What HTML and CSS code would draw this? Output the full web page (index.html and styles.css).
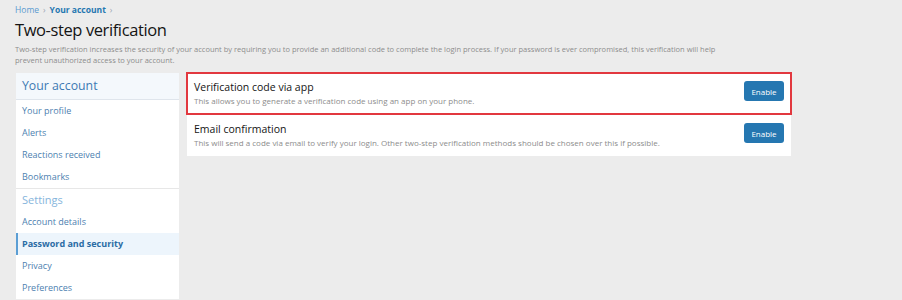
FILE: index.html
```html
<!DOCTYPE html>
<html lang="en">
<head>
    <meta charset="UTF-8">
    <meta name="viewport" content="width=device-width, initial-scale=1.0">
    <title>Two-step verification</title>
    <link rel="stylesheet" href="styles.css">
</head>
<body>
    <div class="page">
        <ul class="breadcrumbs">
            <li><a href="#">Home</a></li>
            <li><a href="#" class="current">Your account</a></li>
        </ul>
        <h1 class="page-title">Two-step verification</h1>
        <p class="page-desc">Two-step verification increases the security of your account by requiring you to provide an additional code to complete the login process. If your password is ever compromised, this verification will help prevent unauthorized access to your account.</p>

        <div class="page-body">
            <nav class="side-nav">
                <h2 class="side-nav-header">Your account</h2>
                <a href="#" class="side-nav-item">Your profile</a>
                <a href="#" class="side-nav-item">Alerts</a>
                <a href="#" class="side-nav-item">Reactions received</a>
                <a href="#" class="side-nav-item">Bookmarks</a>
                <h3 class="side-nav-minor">Settings</h3>
                <a href="#" class="side-nav-item">Account details</a>
                <a href="#" class="side-nav-item selected">Password and security</a>
                <a href="#" class="side-nav-item">Privacy</a>
                <a href="#" class="side-nav-item">Preferences</a>
            </nav>

            <div class="main">
                <div class="block-list">
                    <div class="block-row highlighted">
                        <div class="block-text">
                            <div class="block-title">Verification code via app</div>
                            <div class="block-hint">This allows you to generate a verification code using an app on your phone.</div>
                        </div>
                        <button class="button">Enable</button>
                    </div>
                    <div class="block-row">
                        <div class="block-text">
                            <div class="block-title">Email confirmation</div>
                            <div class="block-hint">This will send a code via email to verify your login. Other two-step verification methods should be chosen over this if possible.</div>
                        </div>
                        <button class="button">Enable</button>
                    </div>
                </div>
            </div>
        </div>
    </div>
</body>
</html>
```

FILE: styles.css
```css
body {
    margin: 0;
    background-color: #ececec;
    font-family: "Open Sans", "Noto Sans", sans-serif;
    color: #141414;
}
a {
    text-decoration: none;
}
.page {
    padding: 4px 15px 0 15px;
}
.breadcrumbs {
    list-style: none;
    margin: 0;
    padding: 0;
    display: flex;
    font-size: 8.5px;
    line-height: 12px;
}
.breadcrumbs li::after {
    content: "\203A";
    color: #9aa6b4;
    margin: 0 4px;
}
.breadcrumbs a {
    color: #5a9bd0;
}
.breadcrumbs a.current {
    color: #2577b1;
    font-weight: bold;
}
.page-title {
    margin: 3px 0 0 0;
    font-size: 16.5px;
    font-weight: normal;
    letter-spacing: -0.4px;
    line-height: 22px;
    color: #141414;
}
.page-desc {
    margin: 3px 0 0 0;
    max-width: 712px;
    font-size: 7.5px;
    line-height: 10.5px;
    color: #8c8c8c;
}
.page-body {
    display: flex;
    align-items: flex-start;
    gap: 8px;
    margin-top: 8px;
}
.side-nav {
    width: 163px;
    margin-left: 1px;
    background-color: #fff;
    display: flex;
    flex-direction: column;
}
.side-nav-header {
    margin: 0;
    height: 26px;
    padding: 0 6px;
    font-size: 12.3px;
    font-weight: normal;
    line-height: 26px;
    color: #3d7ab3;
    background-color: #f4f8fc;
    border-bottom: 1px solid #dfe5ec;
}
.side-nav-minor {
    margin: 0;
    height: 22px;
    padding: 0 6px;
    font-size: 11px;
    font-weight: normal;
    line-height: 22px;
    color: #86b5dc;
    border-top: 1px solid #e7e7e7;
}
.side-nav-item {
    display: block;
    height: 22px;
    padding: 0 6px 0 4px;
    font-size: 9px;
    line-height: 22px;
    color: #4d7fb0;
    border-left: 2px solid transparent;
}
.side-nav-item.selected {
    background-color: #edf5fc;
    border-left-color: #5b9ed4;
    font-weight: bold;
    color: #2b6ca5;
}
.main {
    width: 604px;
}
.block-list {
    background-color: #fff;
}
.block-row {
    display: flex;
    align-items: flex-start;
    justify-content: space-between;
    padding: 7px 7px 8px 7px;
    border-top: 1px solid #ececec;
}
.block-row:first-child {
    border-top: none;
}
.block-row.highlighted {
    outline: 2px solid #e2383f;
    outline-offset: -1px;
}
.block-title {
    font-size: 10.5px;
    line-height: 15px;
    color: #141414;
}
.block-hint {
    font-size: 8px;
    line-height: 11px;
    color: #8c8c8c;
}
.button {
    margin-top: 1px;
    width: 40px;
    height: 20px;
    padding: 0;
    border: none;
    border-radius: 3px;
    background-color: #2577b1;
    color: #fff;
    font-family: inherit;
    font-size: 8px;
}
```
